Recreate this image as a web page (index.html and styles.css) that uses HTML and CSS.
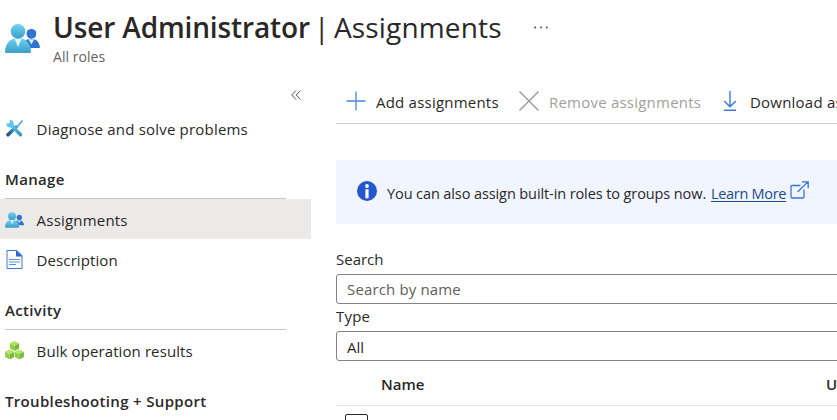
FILE: index.html
```html
<!DOCTYPE html>
<html lang="en">
<head>
<meta charset="utf-8">
<title>User Administrator | Assignments</title>
<link rel="stylesheet" href="styles.css">
</head>
<body>
<svg class="defs" width="0" height="0" aria-hidden="true">
  <defs>
    <linearGradient id="teal" x1="0" y1="0" x2="0" y2="1"><stop offset="0" stop-color="#6fd3f3"/><stop offset="1" stop-color="#3c9dc6"/></linearGradient>
    <linearGradient id="steel" x1="1" y1="0" x2="0" y2="1"><stop offset="0" stop-color="#4aa3dd"/><stop offset="1" stop-color="#1d568f"/></linearGradient>
    <linearGradient id="wrench" x1="0" y1="0" x2="1" y2="1"><stop offset="0" stop-color="#5fc8f0"/><stop offset="1" stop-color="#3a93bd"/></linearGradient>
    <symbol id="people" viewBox="0 0 35 29">
      <circle cx="26.4" cy="9.8" r="4.9" fill="#2f74d0"/>
      <path d="M17 24C18 18 21 14.8 26.400 14.800 32 14.800 34 19 35 23Q35 24 34 24Z" fill="#2f74d0"/>
      <path d="M23.300 15.200h6L26.400 20.500Z" fill="#dbeafa"/>
      <path d="M0 27.500C0 20 5 14 13 14s13 6 13 13.500Q26 29 24.500 29h-23Q0 29 0 27.500Z" fill="url(#teal)"/>
      <path d="M9.500 14.500h7L13 23Z" fill="#e4f5fc"/>
      <circle cx="13" cy="7.400" r="7.300" fill="url(#teal)"/>
    </symbol>
    <symbol id="cube" viewBox="0 0 10 10">
      <path d="M5 0 9.600 2.200 5 4.700.4 2.200Z" fill="#b7e45e"/>
      <path d="M.4 2.200 5 4.700V10L.4 7.500Z" fill="#91cf4b"/>
      <path d="M9.600 2.200 5 4.700V10l4.600-2.500Z" fill="#78b83a"/>
    </symbol>
  </defs>
</svg>
<div class="page">
  <header class="header">
    <svg class="header-icon" width="35" height="29"><use href="#people"/></svg>
    <div class="heading">
      <h1 class="title"><span class="title-role">User Administrator</span><span class="title-view"><span class="bar">|</span>Assignments</span>
        <svg class="more" width="15" height="3" viewBox="0 0 15 3" fill="#444"><circle cx="1.200" cy="1.500" r=".9"/><circle cx="7" cy="1.500" r=".9"/><circle cx="12.800" cy="1.500" r=".9"/></svg>
      </h1>
      <div class="subtitle">All roles</div>
    </div>
  </header>
  <div class="body">
    <nav class="sidebar">
      <div class="collapse"><svg width="10" height="10" viewBox="0 0 10 10" fill="none" stroke="#555"><path d="M5 .5.700 5 5 9.500M9.500.5 5.200 5l4.300 4.500"/></svg></div>
      <a class="item">
        <svg class="item-icon" width="19" height="19" viewBox="0 0 19 19">
          <path d="M17.500 1.500 12 8" stroke="#4aa0d8" stroke-width="1.500"/>
          <path d="M11 8 3 15.800" stroke="url(#steel)" stroke-width="3.600" stroke-linecap="round"/>
          <path d="M6 6l9.500 9.700" stroke="url(#wrench)" stroke-width="3.400" stroke-linecap="round"/>
          <path d="M5 .8 4.600 4.200 1.400 4.600C1.300 8 4 9 6.500 8.200L8.600 6.200C9 3.400 8 1 5 .8Z" fill="#5cc5ed"/>
        </svg>
        <span class="t-diagnose">Diagnose and solve problems</span></a>
      <h2 class="section t-manage">Manage</h2>
      <a class="item selected">
        <svg class="item-icon people-icon" width="19" height="16"><use href="#people"/></svg>
        <span class="t-assign">Assignments</span></a>
      <a class="item">
        <svg class="item-icon" width="19" height="19" viewBox="0 0 19 19">
          <path d="M2 .5h10l5 5v13h-15Z" fill="#fff" stroke="#3f7bd5"/>
          <path d="M11 0 17.500 6.500h-6.500Z" fill="#2a66c8"/>
          <path d="M4 9.500h11M4 12h11M4 14.500h7" stroke="#5b93e4" stroke-width="1.200"/>
        </svg>
        <span class="t-desc">Description</span></a>
      <h2 class="section t-activity">Activity</h2>
      <a class="item">
        <svg class="item-icon" width="19" height="19" viewBox="0 0 19 19">
          <use href="#cube" x="4.500" y="0" width="10" height="10"/>
          <use href="#cube" x="-.3" y="8.500" width="10" height="10"/>
          <use href="#cube" x="9.300" y="8.500" width="10" height="10"/>
        </svg>
        <span class="t-bulk">Bulk operation results</span></a>
      <h2 class="section t-trouble">Troubleshooting + Support</h2>
    </nav>
    <main class="main">
      <div class="toolbar">
        <button class="command add">
          <svg width="20" height="20" viewBox="0 0 20 20"><path d="M10 .5v19M.5 10h19" stroke="#4a86dc" stroke-width="1.300"/></svg>
          <span class="t-add">Add assignments</span></button>
        <button class="command remove" disabled>
          <svg width="20" height="20" viewBox="0 0 20 20"><path d="M.5.5l19 19M19.500.5l-19 19" stroke="#999" stroke-width="1.400"/></svg>
          <span class="t-remove">Remove assignments</span></button>
        <button class="command download">
          <svg width="14" height="20" viewBox="0 0 14 20" fill="none" stroke="#3b78d4" stroke-width="1.400"><path d="M7 0v15.500M1.200 10 7 15.800 12.800 10M1 19.200h12"/></svg>
          <span class="t-download">Download assignments</span></button>
      </div>
      <div class="banner">
        <svg class="info" width="20" height="20" viewBox="0 0 20 20"><circle cx="10" cy="10" r="10" fill="#2457d1"/><circle cx="10" cy="5" r="1.900" fill="#fff"/><rect x="8.400" y="8.300" width="3.200" height="9" fill="#fff"/></svg>
        <span class="t-banner">You can also assign built-in roles to groups now.</span>
        <a class="link">Learn More</a>
        <svg class="external" width="19" height="18" viewBox="0 0 19 18" fill="none" stroke="#3f70d8" stroke-width="1.300"><path d="M10.500 4.500H2.200Q1 4.500 1 5.700v10Q1 17 2.200 17h10.500q1.300 0 1.300-1.300V8.500M7.500 11 18 .9M12 .8h6.200v6.400"/></svg>
      </div>
      <label class="label t-search">Search</label>
      <div class="field placeholder"><span class="t-ph">Search by name</span></div>
      <label class="label t-type">Type</label>
      <div class="field select"><span class="t-all">All</span></div>
      <div class="table-head"><span class="t-name">Name</span><span class="t-user">User name</span></div>
      <div class="table-row"><span class="checkbox"></span></div>
    </main>
  </div>
</div>
</body>
</html>
```
FILE: styles.css
```css
* { box-sizing: border-box; }
body {
  margin: 0;
  background: #fff;
  color: #292827;
  font: 15px/20px "Open Sans", "Noto Sans", sans-serif;
}
.defs { position: absolute; }
.page { width: 837px; height: 420px; overflow: hidden; }
span, a, label { white-space: nowrap; }
svg { display: block; flex: none; }
.header { display: flex; height: 83px; padding: 9px 0 0 5px; }
.header-icon { margin-top: 15px; }
.heading { padding-left: 12px; }
.title {
  display: flex;
  align-items: center;
  margin: 0;
  height: 36px;
  font-size: 28px;
  line-height: 36px;
  font-weight: 400;
}
.title-role { width: 260px; padding-left: 1px; font-weight: 600; letter-spacing: -0.13px; }
.title-view { display: flex; width: 222px; letter-spacing: 0.15px; }
.bar { width: 22px; padding-left: 2px; }
.subtitle { margin-top: 2px; padding-left: 1px; font-size: 14px; color: #656361; letter-spacing: 0.05px; }
.body { display: flex; }
.sidebar { width: 311px; flex: none; }
.collapse { display: flex; justify-content: flex-end; height: 25px; padding: 7px 10px 0 0; }
.item { display: flex; align-items: center; gap: 12px; height: 40px; padding-left: 5px; letter-spacing: 0.2px; }
.item span { padding: 2px 0 0 0.6px; }
.people-icon { margin-top: 1px; }
.t-desc, .t-bulk { letter-spacing: 0.1px; }
.selected { background: #ebeae9; }
.section {
  height: 51px;
  margin: 0 25px 0 5px;
  padding-top: 21px;
  border-bottom: 1px solid #c8c6c4;
  font-size: 15px;
  line-height: 20px;
  font-weight: 600;
  letter-spacing: 0.33px;
}
.main { width: 501px; margin-left: 25px; overflow: hidden; }
.toolbar { display: flex; height: 41px; border-bottom: 1px solid #cfcecd; }
.command {
  display: flex;
  flex: none;
  gap: 10px;
  margin: 0;
  padding: 8px 0 0 10px;
  border: 0;
  background: none;
  color: inherit;
  font: inherit;
  letter-spacing: 0.22px;
}
.command span { padding-top: 1px; }
.add { width: 173px; }
.remove { width: 204px; color: #a19f9d; }
.download { gap: 13px; }
.banner {
  display: flex;
  height: 64px;
  margin-top: 36px;
  padding: 21px 0 0 21px;
  background: #f0f5ff;
  border-radius: 3px 0 0 3px;
}
.banner span, .link { padding-top: 3px; font-size: 14.5px; }
.t-banner { width: 324px; margin-left: 10px; letter-spacing: -0.1px; }
.link { width: 75px; color: #1c4a8a; text-decoration: underline; text-underline-offset: 2px; letter-spacing: -0.3px; }
.external { margin-left: 4px; }
.label { display: block; height: 24px; line-height: 18px; }
.t-search { margin-top: 26px; }
.t-type { margin-top: 3px; letter-spacing: 0.2px; }
.field {
  width: 520px;
  height: 30px;
  padding: 4px 10px;
  border: 1px solid #858382;
  border-radius: 3px;
}
.select { padding-top: 5px; }
.placeholder { color: #605e5c; letter-spacing: 0.15px; }
.table-head {
  display: flex;
  height: 45px;
  padding: 13px 0 0 45px;
  border-bottom: 1px solid #e6e5e4;
  font-weight: 600;
}
.t-name { width: 445px; flex: none; }
.table-row { padding: 8px 0 0 9px; }
.checkbox { display: block; width: 23px; height: 23px; border: 1px solid #292827; border-radius: 2px; }
```
